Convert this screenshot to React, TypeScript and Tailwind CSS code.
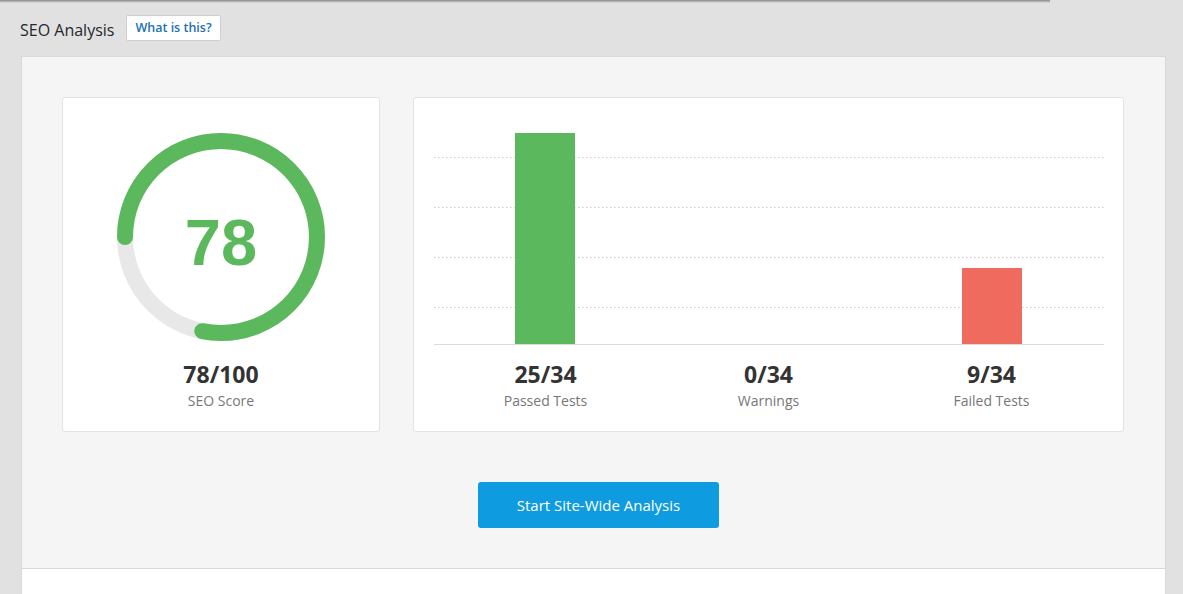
import React from "react";

const font = { fontFamily: '"Open Sans", "Noto Sans", sans-serif' };

function ScoreRing() {
  const r = 96;
  const c = 2 * Math.PI * r;
  const green = c * 0.78;
  return (
    <svg width="208" height="208" viewBox="0 0 208 208">
      <circle cx="104" cy="104" r={r} fill="none" stroke="#e8e8e8" strokeWidth="16" />
      <circle
        cx="104"
        cy="104"
        r={r}
        fill="none"
        stroke="#5cb85c"
        strokeWidth="16"
        strokeLinecap="round"
        strokeDasharray={`${green} ${c}`}
        transform="rotate(180 104 104)"
      />
      <text
        x="104"
        y="132"
        textAnchor="middle"
        fill="#5cb85c"
        fontSize="65"
        fontWeight="700"
        fontFamily='"Liberation Sans", Arial, sans-serif'
      >
        78
      </text>
    </svg>
  );
}

function Chart() {
  const grid = [59.5, 109.5, 159.5, 209.5];
  return (
    <svg width="670" height="247" viewBox="0 0 670 247" className="block">
      {grid.map((y) => (
        <line key={y} x1="0" x2="670" y1={y} y2={y} stroke="#cdcdcd" strokeWidth="1" strokeDasharray="1.5 2.5" />
      ))}
      <rect x="81" y="35" width="60" height="211" fill="#5cb85c" />
      <rect x="528" y="170" width="60" height="76" fill="#ee6b5e" />
      <line x1="0" x2="670" y1="246.5" y2="246.5" stroke="#dcdcdc" strokeWidth="1" />
    </svg>
  );
}

function Stat({ value, label }: { value: string; label: string }) {
  return (
    <div className="flex flex-col items-center">
      <div className="text-[23px] leading-[30px] font-bold text-[#333]">{value}</div>
      <div className="mt-[2px] text-[14px] leading-[20px] text-[#777]">{label}</div>
    </div>
  );
}

export default function App() {
  return (
    <div className="min-h-[594px] w-[1183px] overflow-hidden bg-[#e1e1e1]" style={font}>
      <div className="h-[3px] w-[1050px] bg-gradient-to-b from-[#8a8a8a] to-[#e1e1e1]" />
      <div className="ml-[20px] mt-[12px] flex items-center gap-[12px]">
        <span className="pt-[3px] text-[16px] leading-[20px] text-[#23282d]">SEO Analysis</span>
        <span className="flex h-[26px] items-center rounded-[2px] border border-[#cfcfcf] bg-white px-[8px] text-[12.5px] font-semibold text-[#2271b1]">
          What is this?
        </span>
      </div>
      <div className="ml-[21px] mt-[15px] w-[1145px] border border-[#d9d9d9] bg-[#f5f5f5] px-[40px] pb-[40px] pt-[40px]">
        <div className="flex gap-[33px]">
          <div className="flex w-[318px] flex-col items-center rounded-[3px] border border-[#e3e3e3] bg-white pb-[20px] pt-[35px]">
            <ScoreRing />
            <div className="mt-[18px]">
              <Stat value="78/100" label="SEO Score" />
            </div>
          </div>
          <div className="flex w-[711px] flex-col rounded-[3px] border border-[#e3e3e3] bg-white px-[20px] pb-[20px]">
            <Chart />
            <div className="mt-[14px] grid grid-cols-3">
              <Stat value="25/34" label="Passed Tests" />
              <Stat value="0/34" label="Warnings" />
              <Stat value="9/34" label="Failed Tests" />
            </div>
          </div>
        </div>
        <div className="mt-[50px] flex justify-center pl-[10px]">
          <button className="h-[46px] w-[241px] rounded-[3px] bg-[#0f9be0] text-[15px] text-white">
            Start Site-Wide Analysis
          </button>
        </div>
      </div>
      <div className="ml-[21px] h-[40px] w-[1145px] border-x border-[#d9d9d9] bg-white" />
    </div>
  );
}
